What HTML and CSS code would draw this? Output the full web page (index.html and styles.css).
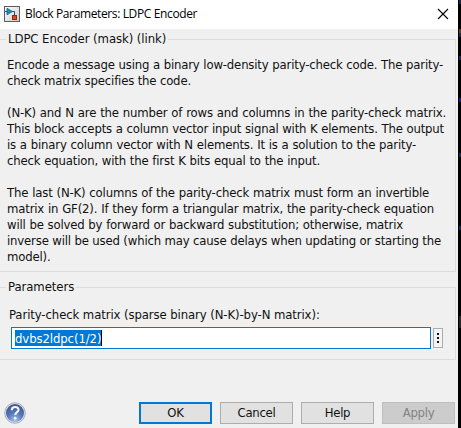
FILE: index.html
```html
<!DOCTYPE html>
<html lang="en">
<head>
<meta charset="utf-8">
<title>Block Parameters: LDPC Encoder</title>
<link rel="stylesheet" href="styles.css">
</head>
<body>
<main class="dialog">
  <header class="titlebar">
    <svg class="app-icon" width="16" height="16" viewBox="0 0 16 16">
      <defs><linearGradient id="paper" x1="0" y1="0" x2="1" y2="1"><stop offset="0" stop-color="#fff"/><stop offset="1" stop-color="#ccc"/></linearGradient></defs>
      <rect x=".5" y=".5" width="15" height="15" fill="url(#paper)" stroke="#5c5c5c"/>
      <path d="M1 5.5h2M8 5.5h2.5V9" fill="none" stroke="#234f70"/>
      <path d="M3 2.2v6.6l5.5-3.3z" fill="#168dc5" stroke="#17618d" stroke-width=".8"/>
      <rect x="8.5" y="9.5" width="4" height="4" fill="#d84b20" stroke="#93260b"/>
    </svg>
    <h1 class="title">Block Parameters: LDPC Encoder</h1>
    <svg class="close" width="12" height="12" viewBox="0 0 12 12"><path d="M1 1l10 10M11 1L1 11" stroke="#000" stroke-width="1.1"/></svg>
  </header>
  <fieldset class="group about">
    <legend>LDPC Encoder (mask) (link)</legend>
    <p><span class="l1">Encode a message using a binary low-density parity-check code. The parity-</span><span class="l2">check matrix specifies the code.</span></p>
    <p><span class="l3">(N-K) and N are the number of rows and columns in the parity-check matrix.</span><span class="l4">This block accepts a column vector input signal with K elements. The output</span><span class="l5">is a binary column vector with N elements. It is a solution to the parity-</span><span class="l6">check equation, with the first K bits equal to the input.</span></p>
    <p><span class="l7">The last (N-K) columns of the parity-check matrix must form an invertible</span><span class="l8">matrix in GF(2). If they form a triangular matrix, the parity-check equation</span><span class="l9">will be solved by forward or backward substitution; otherwise, matrix</span><span class="l10">inverse will be used (which may cause delays when updating or starting the</span><span class="l11">model).</span></p>
  </fieldset>
  <fieldset class="group params">
    <legend>Parameters</legend>
    <div class="label">Parity-check matrix (sparse binary (N-K)-by-N matrix):</div>
    <div class="row">
      <div class="field"><span class="selected">dvbs2ldpc(1/2)</span></div>
      <div class="more"><i></i><i></i><i></i></div>
    </div>
  </fieldset>
  <footer class="footer">
    <svg class="help" width="22" height="22" viewBox="0 0 22 22">
      <defs><radialGradient id="ball" cx=".5" cy=".9" r=".85"><stop offset="0" stop-color="#a5c3f0"/><stop offset=".5" stop-color="#5578ba"/><stop offset="1" stop-color="#405792"/></radialGradient></defs>
      <circle cx="11" cy="11" r="10.3" fill="#d9dde5" stroke="#9ba1ad" stroke-width=".8"/>
      <circle cx="11" cy="11" r="9" fill="url(#ball)"/>
      <path d="M7.8 8.3c0-4.6 6.7-4.2 6.7-.5 0 2.4-3.2 2.4-3.2 5.2" fill="none" stroke="#f2f5fb" stroke-width="2.1"/>
      <circle cx="11.2" cy="16.2" r="1.35" fill="#f2f5fb"/>
    </svg>
    <div class="buttons"><button class="ok">OK</button><button>Cancel</button><button>Help</button><button class="apply" disabled>Apply</button></div>
  </footer>
</main>
<aside class="desktop"><b class="s1"></b><b class="s2"></b><b class="s3"></b><b class="s4"></b><b class="s5"></b><b class="s6"></b><b class="s7"></b><b class="s8"></b></aside>
</body>
</html>
```
FILE: styles.css
```css
* { box-sizing: border-box; }
body { margin: 0; width: 461px; height: 428px; display: flex; overflow: hidden; background: #000; color: #111; font: 13px/16px "DejaVu Sans Condensed", "DejaVu Sans", sans-serif; }
.dialog { width: 458px; height: 428px; background: #f0f0f0; display: flex; flex-direction: column; flex: none; }
.titlebar { height: 29px; flex: none; background: #fff; display: flex; align-items: center; padding: 0 9px 2px 4px; }
.app-icon { flex: none; }
.title { margin: 0 auto 0 5px; font: 12px/16px "Open Sans", sans-serif; color: #000; width: 173px; letter-spacing: -.37px; white-space: nowrap; }
.close { flex: none; }
.group { margin: 0 2px 0 0; min-width: 0; border: 1px solid #dcdcdc; border-left: 0; padding: 0; }
.group legend { margin-left: 6px; padding: 0 2px; height: 20px; line-height: 20px; letter-spacing: -.07px; }
.about { height: 243px; padding-left: 7px; }
.about legend { margin-left: -1px; }
.about p { margin: 8px 0 16px; }
.about p + p { margin-top: 0; }
.about span { display: block; white-space: nowrap; text-align: justify; text-align-last: justify; letter-spacing: -.17px; }
.l1 { width: 436px; }
.l2 { width: 182px; }
.l3 { width: 439px; }
.l4 { width: 437px; }
.l5 { width: 409px; }
.l6 { width: 313px; }
.l7 { width: 422px; }
.l8 { width: 427px; }
.l9 { width: 396px; }
.l10 { width: 434px; }
.l11 { width: 43px; }
.params { height: 83px; margin-top: 5px; }
.label { margin: 10px 0 0 9px; letter-spacing: -.1px; white-space: nowrap; }
.row { display: flex; align-items: center; margin: 4px 0 0 11px; gap: 2px; }
.field { width: 420px; height: 22px; background: #fff; border: 1px solid #0078d7; padding: 2px 3px; }
.selected { display: block; width: 87px; height: 16px; line-height: 17px; letter-spacing: -.1px; background: #0078d7; color: #fff; border-right: 1px solid #000; white-space: nowrap; }
.more { width: 10px; height: 20px; border: 1px solid #adadad; background: #f3f3f3; display: flex; flex-direction: column; align-items: center; justify-content: center; gap: 2px; }
.more i { width: 2px; height: 2px; background: #111; }
.footer { display: flex; margin-top: auto; padding: 0 3px 4px 4px; align-items: center; justify-content: space-between; }
.buttons { display: flex; gap: 8px; }
button { width: 73px; height: 22px; padding: 0; border: 1px solid #adadad; background: #e1e1e1; color: #111; font: 13px/18px "DejaVu Sans Condensed", sans-serif; letter-spacing: -.3px; }
.ok { border: 2px solid #0078d7; }
.apply { color: #838383; background: #ccc; border-color: #bfbfbf; }
.desktop { width: 3px; height: 428px; background: #000; display: grid; grid-template-rows: 3px 30px 23px 42px 55px 73px 90px 64px; align-items: start; }
.desktop b { width: 2px; height: 4px; margin-left: 1px; background: #18264c; }
.desktop .s2 { background: #603c20; align-self: end; }
.desktop .s5 { background: #101f80; }
.desktop .s7 { background: #182550; }
.desktop .s8 { height: 12px; background: #252525; }
```
